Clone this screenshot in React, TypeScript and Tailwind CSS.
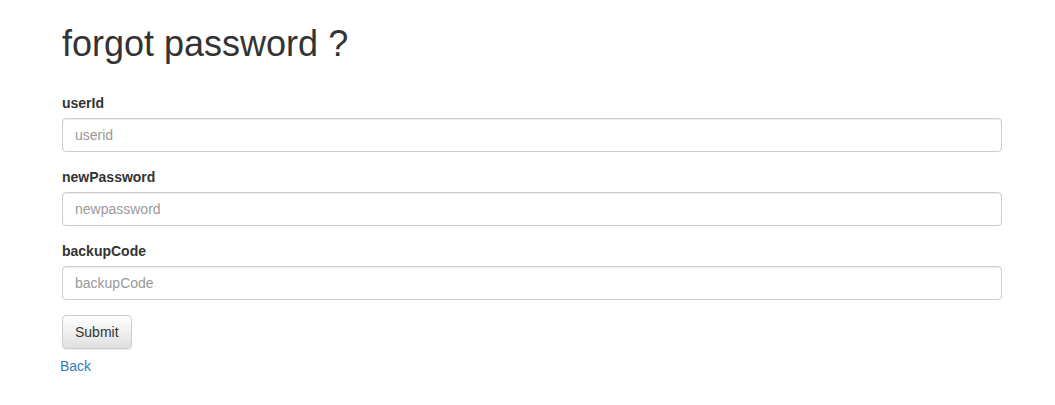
import React, { useState } from 'react';

const fields = [
    { id: 'userId', label: 'userId', placeholder: 'userid' },
    { id: 'newPassword', label: 'newPassword', placeholder: 'newpassword' },
    { id: 'backupCode', label: 'backupCode', placeholder: 'backupCode' },
];

const App: React.FC = () => {
    const [values, setValues] = useState<Record<string, string>>({});

    return (
        <div className="min-h-[405px] bg-white font-['Liberation_Sans',Arial,sans-serif] text-[14px] leading-[20px] text-[#333]">
            <div className="ml-[62px] w-[940px] pt-[24px]">
                <h1 className="text-[36px] leading-[40px] font-normal mb-[29px]">forgot password ?</h1>
                <form onSubmit={(e) => e.preventDefault()}>
                    {fields.map((f) => (
                        <div key={f.id} className="mb-[15px]">
                            <label htmlFor={f.id} className="block font-bold mb-[5px]">
                                {f.label}
                            </label>
                            <input
                                id={f.id}
                                type="text"
                                placeholder={f.placeholder}
                                value={values[f.id] || ''}
                                onChange={(e) => setValues({ ...values, [f.id]: e.target.value })}
                                className="block w-full h-[34px] px-[12px] py-[6px] border border-[#ccc] rounded-[4px] shadow-[inset_0_1px_1px_rgba(0,0,0,0.075)] placeholder:text-[#999] outline-none"
                            />
                        </div>
                    ))}
                    <button
                        type="submit"
                        className="h-[34px] px-[12px] border border-[#ccc] rounded-[4px] bg-gradient-to-b from-white to-[#e0e0e0] text-[#333] shadow-[inset_0_1px_0_rgba(255,255,255,0.15),0_1px_1px_rgba(0,0,0,0.075)]"
                    >
                        Submit
                    </button>
                </form>
                <div className="mt-[7px] -ml-[2px]">
                    <a href="#" className="text-[#337ab7]">
                        Back
                    </a>
                </div>
            </div>
        </div>
    );
};

export default App;
